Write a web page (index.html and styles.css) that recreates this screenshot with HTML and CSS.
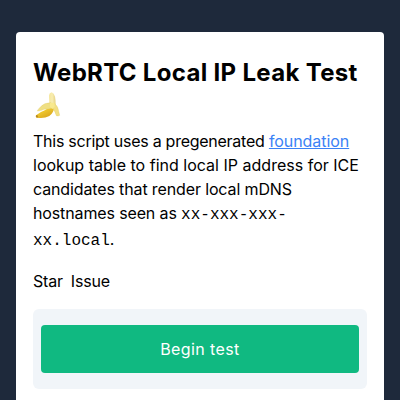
FILE: index.html
```html
<!DOCTYPE html>
<html lang="en"><head><meta charset="utf-8"><title>WebRTC Local IP Leak Test</title><link rel="stylesheet" href="styles.css"></head>
<body>
<main class="card">
<h1 class="title">WebRTC Local IP Leak Test
<svg class="banana" viewBox="15 15 90 96" role="img" aria-label="banana">
<defs>
<linearGradient id="flesh"><stop stop-color="#f5e69d"/><stop offset=".5" stop-color="#f8edb0"/><stop offset="1" stop-color="#e5d184"/></linearGradient>
<linearGradient id="skin" x1="0" y1="0" x2=".6" y2="1"><stop stop-color="#f8dc4b"/><stop offset=".6" stop-color="#edc52d"/><stop offset="1" stop-color="#d9a51d"/></linearGradient>
</defs>
<path fill="url(#flesh)" d="M64 63 63 34Q64 27 71 25Q78 27 81 38Q84 50 82 68L75 75Z"/>
<path fill="url(#skin)" d="M70 61Q60 77 39 84L24 94Q22 98 26 101Q48 105 64 96Q77 87 79 69L82 56Z"/>
<path fill="#b98a21" d="M24 94 28 93 31 99 26 101Q22 98 24 94Z"/>
<path fill="#efdf83" stroke="#dfc557" stroke-width="1" d="M69 56Q48 56 38 68Q29 77 28 81Q39 81 48 76Q60 76 77 72Z"/>
<path fill="#f2df82" stroke="#dfc760" stroke-width="1" d="M79 57Q91 68 92 82Q94 89 95 94Q91 97 85 95Q82 84 75 74Z"/>
<path fill="#f8e98e" d="M66 56 80 56 80 68 74 75 66 69Z"/>
</svg></h1>
<p class="intro"><span class="line-first">This script uses a pregenerated</span> <a class="link" href="#">foundation</a> <span class="line-second">lookup table to find local IP address for ICE</span> candidates that render local mDNS hostnames seen as <code class="code">xx-xxx-xxx-<br>xx.local</code>.</p>
<div class="links"><span>Star</span><span>Issue</span></div>
<section class="panel"><button class="button">Begin test</button></section>
</main>
</body></html>
```
FILE: styles.css
```css
*{box-sizing:border-box}
html{background:#1e293b}
body{margin:0;padding:32px 16px 0;height:400px;overflow:hidden;font-family:Inter,sans-serif;font-size:16px;line-height:24px;color:#000}
.card{background:#fff;border-radius:4px 4px 0 0;padding:25px 17px 0;height:368px}
.title{margin:0 0 8px;font-size:24px;line-height:32px;font-weight:700;letter-spacing:.32px}
.banana{display:block;width:30px;height:32px}
.intro{margin:0 0 16px;font-weight:400;letter-spacing:-.13px}
.line-first{letter-spacing:-.26px}
.line-second{letter-spacing:.01px}
.link{color:#3b82f6;text-decoration:underline;letter-spacing:-.06px}
.code{font-family:"Liberation Mono",monospace;font-size:16px;font-weight:400;letter-spacing:0}
.links{display:flex;gap:8px;margin-bottom:16px;letter-spacing:-.2px}
.panel{background:#f1f5f9;border-radius:6px;padding:16px 8px}
.button{display:block;width:100%;height:48px;border:0;border-radius:4px;background:#10b981;color:#fff;font:400 16px/24px Inter,sans-serif;letter-spacing:.4px}
```
